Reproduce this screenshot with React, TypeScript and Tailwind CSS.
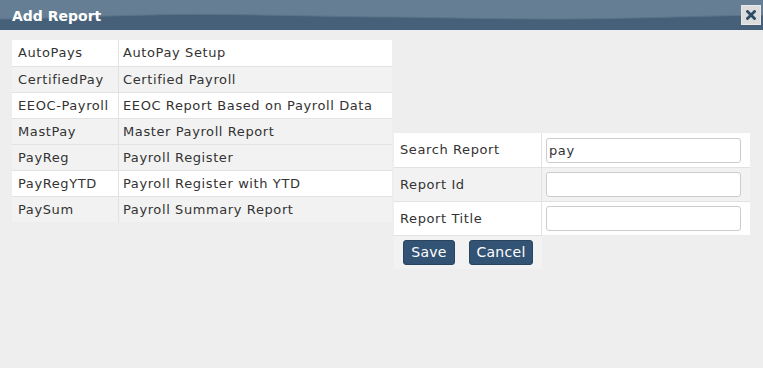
import { useState } from "react";

const reports = [
    { id: "AutoPays", title: "AutoPay Setup", bg: "bg-white" },
    { id: "CertifiedPay", title: "Certified Payroll", bg: "bg-[#f2f2f2]" },
    { id: "EEOC-Payroll", title: "EEOC Report Based on Payroll Data", bg: "bg-white" },
    { id: "MastPay", title: "Master Payroll Report", bg: "bg-[#f2f2f2]" },
    { id: "PayReg", title: "Payroll Register", bg: "bg-[#f2f2f2]" },
    { id: "PayRegYTD", title: "Payroll Register with YTD", bg: "bg-white" },
    { id: "PaySum", title: "Payroll Summary Report", bg: "bg-[#f2f2f2]" },
];

export default function App() {
    const [search, setSearch] = useState("pay");
    const [reportId, setReportId] = useState("");
    const [reportTitle, setReportTitle] = useState("");

    const fields = [
        { label: "Search Report", value: search, set: setSearch, bg: "bg-white" },
        { label: "Report Id", value: reportId, set: setReportId, bg: "bg-[#f2f2f2]" },
        { label: "Report Title", value: reportTitle, set: setReportTitle, bg: "bg-white" },
    ];

    return (
        <div className="w-[763px] h-[368px] bg-[#eeeeee] font-['DejaVu_Sans',Verdana,sans-serif] text-[13px] tracking-[0.6px] text-[#333] overflow-hidden">
            {/* title bar */}
            <div className="relative h-[30px] bg-[#466079] overflow-hidden">
                <svg className="absolute inset-0" width="763" height="30" viewBox="0 0 763 30" preserveAspectRatio="none">
                    <path d="M0 0 H763 V15 C700 16 620 19 560 19 C480 19 420 17 380 17 C300 16 200 13 150 15 C90 16 40 19 0 19 Z" fill="#667e93" />
                    <path d="M0 19 C40 19 90 16 150 15 C200 13 300 16 380 17 C420 17 480 19 560 19 C620 19 700 16 763 15" stroke="#5a7389" strokeWidth="1" fill="none" />
                </svg>
                <div className="relative flex items-center justify-between h-full pl-3 pr-[2px]">
                    <span className="text-white font-bold text-[14px] tracking-normal leading-none mt-[1px]">Add Report</span>
                    <button className="w-[20px] h-[20px] bg-[#dcdcdc] border border-[#e8e8e8] flex items-center justify-center">
                        <svg width="10" height="10" viewBox="0 0 10 10">
                            <path d="M1.5 1.5 L8.5 8.5 M8.5 1.5 L1.5 8.5" stroke="#2d4c68" strokeWidth="2.8" strokeLinecap="square" />
                        </svg>
                    </button>
                </div>
            </div>

            <div className="flex items-start pl-3 pt-[10px]">
                {/* report list */}
                <div className="w-[380px] flex flex-col">
                    {reports.map((r, i) => (
                        <div
                            key={r.id}
                            className={`flex h-[26px] ${r.bg} ${i > 0 ? "border-t border-[#e2e2e2]" : ""}`}
                        >
                            <div className="w-[107px] pl-[6px] flex items-center border-r border-[#e2e2e2] whitespace-nowrap">
                                {r.id}
                            </div>
                            <div className="flex-1 pl-[4px] flex items-center whitespace-nowrap">{r.title}</div>
                        </div>
                    ))}
                </div>

                {/* form */}
                <div className="ml-[2px] mt-[93px] w-[356px] flex flex-col">
                    {fields.map((f, i) => (
                        <div
                            key={f.label}
                            className={`flex h-[34px] ${f.bg} ${i > 0 ? "border-t border-[#e2e2e2]" : ""}`}
                        >
                            <div className="w-[148px] pl-[6px] flex items-center border-r border-[#e2e2e2]">
                                {f.label}
                            </div>
                            <div className="flex-1 pl-[4px] flex items-center">
                                <input
                                    type="text"
                                    className="w-[195px] h-[25px] border border-[#cccccc] rounded-[3px] px-[2px] text-[13px] tracking-[0.6px] bg-white focus:outline-none"
                                    value={f.value}
                                    onChange={(e) => f.set(e.target.value)}
                                />
                            </div>
                        </div>
                    ))}
                    <div className="w-[148px] h-[34px] bg-[#f2f2f2] border-t border-[#e2e2e2] flex items-center gap-[14px] pl-[9px]">
                        <button className="w-[52px] h-[25px] bg-[#325374] border border-[#2a4560] rounded-[3px] text-white text-[14px] tracking-[0.3px]">
                            Save
                        </button>
                        <button className="w-[64px] h-[25px] bg-[#325374] border border-[#2a4560] rounded-[3px] text-white text-[14px] tracking-[0.3px]">
                            Cancel
                        </button>
                    </div>
                </div>
            </div>
        </div>
    );
}
